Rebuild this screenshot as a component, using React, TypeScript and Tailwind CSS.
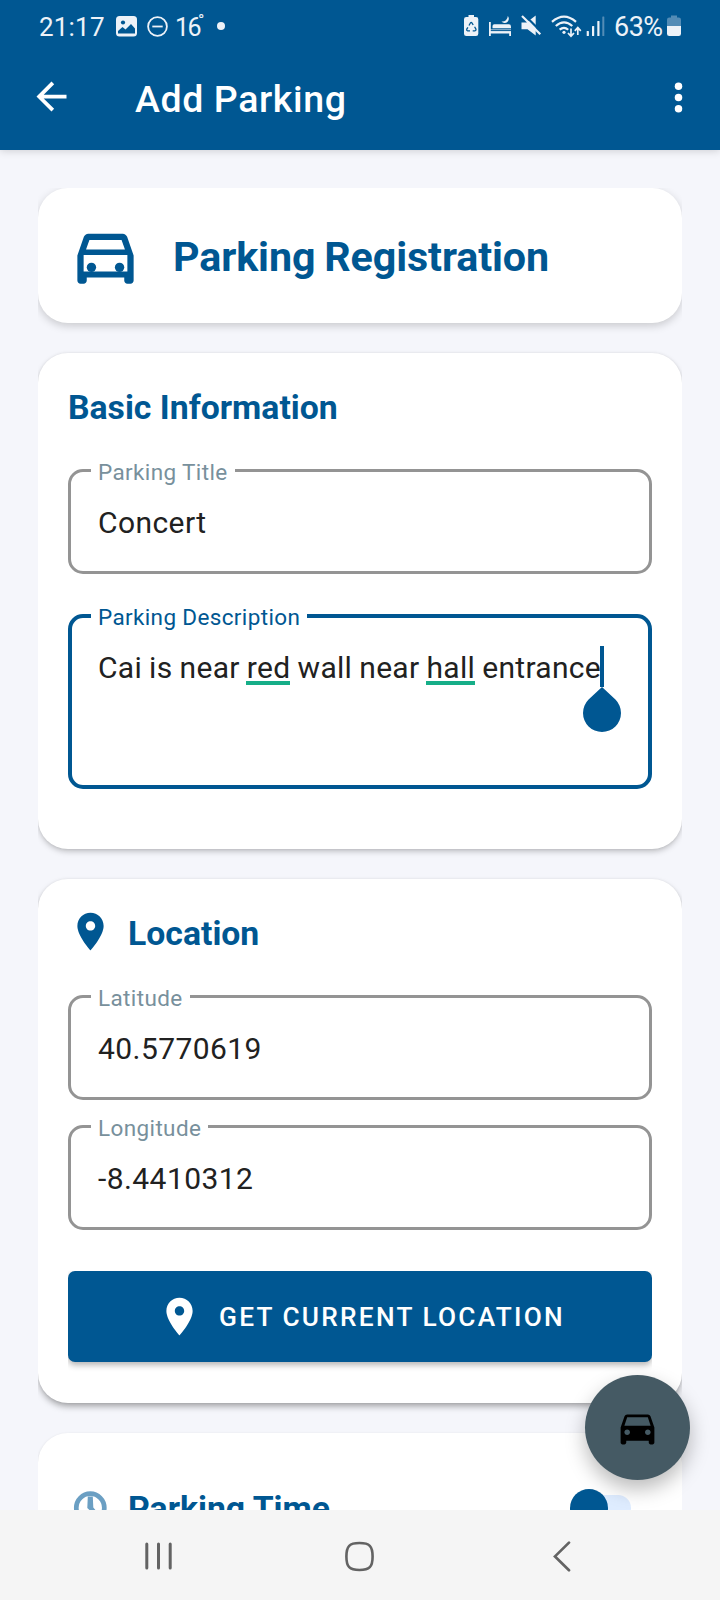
import type { ReactNode } from "react";

function StatusBar() {
  return (
    <div className="flex h-[52px] items-start text-[#edf2f8]">
      <span className="ml-[39px] mt-[12px] w-[77px] whitespace-nowrap text-[26px] leading-[31px] tracking-[0.2px]">21:17</span>
      <svg className="mt-4 h-[21px] w-[21px]" viewBox="0 0 21 21">
        <rect width="21" height="20.5" rx="3.5" fill="currentColor" />
        <circle cx="7" cy="6.5" r="2.1" fill="#005792" />
        <path d="M2 17.500V15l4.500-4 3 2.500L15 8l4 4.500v5z" fill="#005792" />
      </svg>
      <svg className="ml-[10px] mt-4 h-[21px] w-[21px]" viewBox="0 0 21 21" fill="none" stroke="currentColor" strokeWidth="1.8">
        <circle cx="10.5" cy="10.500" r="9.400" />
        <path d="M5.300 10.500h10.400" />
      </svg>
      <span className="ml-[7px] mt-[13px] flex w-[42px] text-[25px] leading-[30px]">
        <span className="tracking-[-1.5px]">16</span>
        <span className="-ml-[2px] -mt-[5px] text-[17px] leading-[24px]">°</span>
      </span>
      <span className="mt-[22px] h-2 w-2 rounded-full bg-[#edf2f8]" />
      <svg className="ml-[239px] mt-[15px] h-[22px] w-[15px]" viewBox="0 0 15 22">
        <path d="M4.500 0h5.500v2H12q2.300 0 2.300 2.300v14.400q0 2.300-2.300 2.300H2.300Q0 21 0 18.700V4.300Q0 2 2.300 2h2.200z" fill="currentColor" />
        <g fill="none" stroke="#005792" strokeWidth="1.300">
          <path d="M5 10.500l1.500-2.700q.7-1 1.400 0l1.300 2.200M10.600 11.800l1.300 2.300q.4 1.400-1 1.700H8.700M6 15.800H3.700q-1.400-.3-.9-1.700l1.100-1.800" />
        </g>
      </svg>
      <svg className="ml-[10px] mt-[15px] h-[22px] w-[23px]" viewBox="0 0 23 22" fill="currentColor">
        <path d="M0 7h1.800v7.500H22V21h-1.800v-2.500H1.800V21H0z" />
        <path d="M3.500 13.300v-2.200q0-1.800 1.800-1.800h14.500q2.200 0 2.200 2.200v1.800z" />
        <path d="M18.800 1a3.900 3.900 0 1 1-6.300 5.500A5.500 5.500 0 0 0 18.800 1z" />
        <path d="M1.800 15.600H22" stroke="#005792" strokeWidth="1" />
      </svg>
      <svg className="ml-[9px] mt-[15px] h-[22px] w-[21px]" viewBox="0 0 21 22">
        <path d="M0.500 7.500h5L14.700 0.500v20L6.500 14.300h-6z" fill="currentColor" />
        <path d="M2.700-.7L20.800 17.400" stroke="#005792" strokeWidth="2.200" />
        <path d="M1 1l18.300 18.300" stroke="currentColor" strokeWidth="2.200" />
      </svg>
      <svg className="ml-[9px] mt-[14px] h-[24px] w-[31px]" viewBox="0 0 31 24" fill="none" stroke="currentColor">
        <g strokeWidth="2.200">
          <path d="M1 7.800Q13-2.600 25 7.800" />
          <path d="M4.800 12Q13 4.800 21.300 12" />
          <path d="M8.600 15.700q4.400-3.800 8.600 0" />
        </g>
        <circle cx="13" cy="18.300" r="1.600" fill="currentColor" stroke="none" />
        <path d="M20 14.500v7.300M17 19l3 3.200 3-3.200M26.800 21v-7.300M23.800 16.800l3-3.200 3 3.200" strokeWidth="1.700" />
      </svg>
      <svg className="ml-[4px] mt-4 h-[21px] w-[20px]" viewBox="0 0 20 21" fill="currentColor">
        <rect x="0.700" y="15" width="2.200" height="5" rx="0.500" />
        <rect x="6" y="10" width="2.200" height="10" rx="0.500" />
        <rect x="11.300" y="5" width="2.200" height="15" rx="0.500" />
        <rect x="16.300" y="0.500" width="2" height="19.500" rx="0.500" opacity="0.35" />
      </svg>
      <span className="ml-[8px] mt-[12px] w-[53px] whitespace-nowrap text-[27px] leading-[31px] tracking-[-0.5px]">63%</span>
      <svg className="mt-[15px] h-[22px] w-[14px]" viewBox="0 0 14 22" fill="currentColor">
        <path d="M4 .5h6v2h1.700Q14 2.500 14 4.800V11H0V4.800q0-2.300 2.300-2.300H4z" opacity="0.35" />
        <path d="M0 11h14v7.700q0 2.300-2.300 2.300H2.300Q0 21 0 18.700z" />
      </svg>
    </div>
  );
}

function Pin({ className }: { className: string }) {
  return (
    <svg className={className} viewBox="0 0 24 24" fill="currentColor">
      <path d="M12 2C8.130 2 5 5.130 5 9c0 5.250 7 13 7 13s7-7.750 7-13c0-3.870-3.130-7-7-7zm0 9.500c-1.380 0-2.500-1.120-2.500-2.500s1.120-2.500 2.500-2.500 2.500 1.120 2.500 2.500-1.120 2.500-2.500 2.500z" />
    </svg>
  );
}

function Card({ className, children }: { className: string; children: ReactNode }) {
  return (
    <section className={`flex shrink-0 flex-col rounded-[30px] bg-white ${className}`}>
      {children}
    </section>
  );
}

function Field({ label, value, className = "" }: { label: string; value: string; className?: string }) {
  return (
    <div className={`relative h-[105px] shrink-0 rounded-[15px] border-[3px] border-[#949494] pl-[27px] pt-[31px] ${className}`}>
      <span className="absolute -top-[13px] left-[20px] whitespace-nowrap bg-white px-[7px] text-[22.5px] leading-[26px] tracking-[0.38px] text-[#78909c]">{label}</span>
      <span className="block text-[30px] leading-[40px] tracking-[0.42px]">{value}</span>
    </div>
  );
}

function Flagged({ children }: { children: ReactNode }) {
  return (
    <span className="relative">
      {children}
      <span className="absolute -left-px right-0 bottom-0 h-1 bg-[#16ae88]" />
    </span>
  );
}

export default function App() {
  return (
    <div className="relative flex h-[1600px] w-[720px] flex-col overflow-hidden bg-[#f5f6fb] font-['Roboto',sans-serif] text-[#212121]">
      <header className="relative z-10 flex h-[150px] shrink-0 flex-col bg-[#005792] text-white shadow-[0_1px_8px_rgba(0,0,0,0.16)]">
        <StatusBar />
        <div className="flex h-[98px] items-start">
          <svg className="ml-[28.5px] mt-[22px] h-[45px] w-[45px]" viewBox="0 0 24 24" fill="currentColor">
            <path d="M20 11H7.830l5.590-5.590L12 4l-8 8 8 8 1.410-1.410L7.830 13H20v-2z" />
          </svg>
          <h1 className="ml-[61.5px] mt-[22px] flex-1 whitespace-nowrap text-[37.5px] font-medium leading-[50px] tracking-[0.6px]">Add Parking</h1>
          <svg className="mr-[19px] mt-[23px] h-[45px] w-[45px]" viewBox="0 0 24 24" fill="currentColor">
            <circle cx="12" cy="6" r="2" />
            <circle cx="12" cy="12" r="2" />
            <circle cx="12" cy="18" r="2" />
          </svg>
        </div>
      </header>

      <main className="mx-[38px] mt-[38px] flex h-[1322px] flex-col gap-[30px] overflow-hidden">
        <Card className="h-[135px] shadow-[0_3px_8px_rgba(0,0,0,0.18)]">
          <div className="flex items-start pl-[30px] pt-[30px] text-[#005792]">
            <svg className="h-[75px] w-[75px]" viewBox="0 0 24 24" fill="currentColor">
              <path d="M18.920 6.010C18.720 5.420 18.160 5 17.500 5h-11c-.66 0-1.210.42-1.420 1.010L3 12v8c0 .55.45 1 1 1h1c.55 0 1-.45 1-1v-1h12v1c0 .55.45 1 1 1h1c.55 0 1-.45 1-1v-8l-2.080-5.990zM6.850 7h10.290l1.080 3.110H5.770L6.850 7zM19 17.100H5v-5.300h14v5.300z" />
              <circle cx="7.500" cy="15.800" r="1.500" />
              <circle cx="16.500" cy="15.800" r="1.500" />
            </svg>
            <h2 className="ml-[30px] mt-[14px] whitespace-nowrap text-[41.25px] font-bold leading-[50px] tracking-[-0.12px] [word-spacing:-1.2px]">Parking Registration</h2>
          </div>
        </Card>

        <Card className="h-[496px] px-[30px] shadow-[0_3px_6px_-1px_rgba(0,0,0,0.26),0_0_3px_rgba(0,0,0,0.08)]">
          <h3 className="mt-[35px] whitespace-nowrap text-[33.75px] font-bold leading-[40px] text-[#005792]">Basic Information</h3>
          <Field label="Parking Title" value="Concert" className="mt-[41px]" />
          <div className="relative mt-10 h-[175px] rounded-[15px] border-4 border-[#005792] pl-[26px] pt-[30px]">
            <span className="absolute -top-[14px] left-[19px] whitespace-nowrap bg-white px-[7px] text-[22.5px] leading-[26px] tracking-[0.36px] text-[#005792]">Parking Description</span>
            <p className="whitespace-nowrap text-[30px] leading-[40px] tracking-[0.3px] [word-spacing:-0.66px]">
              Cai is near <Flagged>red</Flagged> wall near <Flagged>hall</Flagged> entrance
            </p>
            <span className="absolute left-[528px] top-[28px] h-[41px] w-1 bg-[#005792]" />
            <svg className="absolute left-[511px] top-[69px] h-[46px] w-[38px]" viewBox="0 0 38 46" fill="#005792">
              <path d="M19 0L32.430 12.570A19 19 0 1 1 5.570 12.570Z" />
            </svg>
          </div>
        </Card>

        <Card className="h-[524px] px-[30px] shadow-[0_4px_7px_-1px_rgba(0,0,0,0.36),0_0_3px_rgba(0,0,0,0.07)]">
          <div className="flex h-[116px] items-start pt-[30px] text-[#005792]">
            <Pin className="h-[45px] w-[45px]" />
            <h3 className="ml-[15px] mt-[5px] whitespace-nowrap text-[33.75px] font-bold leading-[40px]">Location</h3>
          </div>
          <Field label="Latitude" value="40.5770619" />
          <Field label="Longitude" value="-8.4410312" className="mt-[25px]" />
          <div className="-mb-6 mt-[41px] overflow-hidden pb-6">
            <button className="flex h-[91px] w-full items-start rounded-[7px] bg-[#005792] pl-[89px] pt-[23px] text-white shadow-[0_3px_6px_rgba(0,0,0,0.3)]">
              <Pin className="h-[45px] w-[45px]" />
              <span className="ml-[17px] mt-[7px] whitespace-nowrap text-[26.25px] font-medium leading-[32px] tracking-[2.250px] [word-spacing:-0.4px]">GET CURRENT LOCATION</span>
            </button>
          </div>
        </Card>

        <Card className="h-[200px] px-[30px] shadow-[0_1px_3px_rgba(0,0,0,0.14)]">
          <div className="flex items-start pt-[52px] text-[#005792]">
            <svg className="h-[45px] w-[45px]" viewBox="0 0 45 45" fill="none" stroke="#6b9fc3">
              <circle cx="22.300" cy="22.700" r="14" strokeWidth="4.700" />
              <path d="M19.800 11.500h5l.500 11 6 7-3 2-9-8.500z" fill="#6b9fc3" stroke="none" />
            </svg>
            <h3 className="ml-[15px] mt-[4px] flex-1 whitespace-nowrap text-[33.75px] font-bold leading-[40px]">Parking Time</h3>
            <div className="mr-[21px] mt-[10px] flex h-[26px] w-[56px] items-center rounded-full bg-[#deecff]">
              <span className="-ml-[5px] h-[38px] w-[38px] shrink-0 rounded-full bg-[#005792]" />
            </div>
          </div>
        </Card>
      </main>

      <nav className="relative flex h-[90px] shrink-0 items-center bg-[#f5f5f5] pt-[2px]">
        <svg className="ml-[143px] h-[30px] w-[30px]" viewBox="0 0 30 30" stroke="#636363" strokeWidth="3" strokeLinecap="round">
          <path d="M3.800 3v24M15.500 3v24M27.200 3v24" />
        </svg>
        <svg className="ml-[171px] h-[32px] w-[32px]" viewBox="0 0 32 32" fill="none" stroke="#636363" strokeWidth="2.600">
          <path d="M15.500 3C25.500 3 28.600 6 28.600 16.500S25.500 30 15.500 30 2.400 27 2.400 16.500 5.500 3 15.500 3z" />
        </svg>
        <svg className="ml-[176px] h-[32px] w-[20px]" viewBox="0 0 20 32" fill="none" stroke="#636363" strokeWidth="2.700" strokeLinecap="round">
          <path d="M17 2.600L3 16.400l14 13.800" />
        </svg>
      </nav>

      <button className="absolute left-[585px] top-[1375px] z-20 flex h-[105px] w-[105px] items-center justify-center rounded-full bg-[#455a64] shadow-[0_9px_20px_rgba(0,0,0,0.27)]">
        <svg className="h-[45px] w-[45px]" viewBox="0 0 24 24" fill="#000">
          <path d="M18.920 6.010C18.720 5.420 18.160 5 17.500 5h-11c-.66 0-1.210.42-1.420 1.010L3 12v8c0 .55.45 1 1 1h1c.55 0 1-.45 1-1v-1h12v1c0 .55.45 1 1 1h1c.55 0 1-.45 1-1v-8l-2.080-5.990zM6.500 16c-.83 0-1.500-.67-1.500-1.500S5.670 13 6.500 13s1.500.67 1.500 1.500S7.330 16 6.500 16zm11 0c-.83 0-1.500-.67-1.500-1.500s.67-1.500 1.500-1.500 1.500.67 1.500 1.500-.67 1.500-1.500 1.500zM5 11l1.500-4.500h11L19 11H5z" />
        </svg>
      </button>
    </div>
  );
}
